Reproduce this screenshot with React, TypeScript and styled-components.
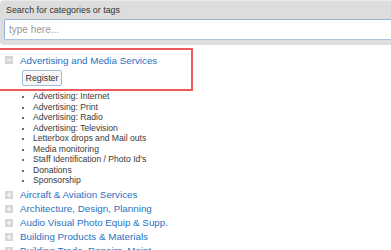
import React from 'react';
import styled, { createGlobalStyle } from 'styled-components';

const GlobalStyle = createGlobalStyle`
  html, body {
    margin: 0;
    padding: 0;
    background: #fff;
    overflow: hidden;
  }
  body {
    font-family: "Liberation Sans", Arial, sans-serif;
    color: #333;
  }
`;

const Page = styled.div({
  width: '430px',
  display: 'flex',
  flexDirection: 'column',
});

const SearchPanel = styled.div({
  background: '#dddddd',
  borderTop: '1px solid #ececec',
  borderRadius: '4px',
  padding: '2px 4px 5px 4px',
  display: 'flex',
  flexDirection: 'column',
  gap: '2px',
});

const SearchLabel = styled.label({
  fontSize: '8.9px',
  lineHeight: '14px',
  paddingLeft: '2px',
  color: '#333',
});

const SearchInput = styled.input`
  box-sizing: border-box;
  height: 21px;
  border: 1px solid #8fb3d9;
  border-bottom-color: #a8c4e0;
  border-radius: 2px;
  padding: 0 4px;
  font-family: "Liberation Sans", Arial, sans-serif;
  font-size: 10px;
  color: #333;
  outline: none;
  &::placeholder {
    color: #999;
  }
`;

const Tree = styled.div({
  display: 'flex',
  flexDirection: 'column',
  marginTop: '3px',
});

const Highlight = styled.div({
  width: '195px',
  marginLeft: '-2px',
  border: '2px solid #ec5a5c',
  boxSizing: 'border-box',
  padding: '3px 0 3px 0',
  display: 'flex',
  flexDirection: 'column',
  alignItems: 'flex-start',
  gap: '3px',
});

const CategoryRow = styled.div`
  display: flex;
  align-items: center;
  gap: 7px;
  height: 14px;
  padding-left: 5px;
`;

const CategoryLink = styled.a({
  fontSize: '9.8px',
  color: '#1f72c4',
  textDecoration: 'none',
  whiteSpace: 'nowrap',
});

const RegisterButton = styled.button({
  marginLeft: '22px',
  height: '16px',
  width: '40px',
  padding: 0,
  boxSizing: 'border-box',
  border: '1px solid #9dbfdf',
  borderRadius: '2px',
  background: '#f7f7f7',
  fontFamily: '"Liberation Sans", Arial, sans-serif',
  fontSize: '8.9px',
  color: '#333',
});

const SubList = styled.ul({
  margin: '0 0 2px 0',
  paddingLeft: '33px',
  fontSize: '8.6px',
  lineHeight: '10.5px',
  color: '#3a3a3a',
  listStyle: 'disc',
  '& li::marker': {
    fontSize: '7px',
  },
});

const ToggleIcon = ({ open }: { open: boolean }) => (
  <svg width="8" height="8" viewBox="0 0 8 8">
    <rect width="8" height="8" fill="#d6d6d6" />
    <rect x="1.5" y="3.5" width="5" height="1" fill="#fff" />
    {!open && <rect x="3.5" y="1.5" width="1" height="5" fill="#fff" />}
  </svg>
);

const subItems = [
  'Advertising: Internet',
  'Advertising: Print',
  'Advertising: Radio',
  'Advertising: Television',
  'Letterbox drops and Mail outs',
  'Media monitoring',
  "Staff Identification / Photo Id's",
  'Donations',
  'Sponsorship',
];

const categories = [
  'Aircraft & Aviation Services',
  'Architecture, Design, Planning',
  'Audio Visual Photo Equip & Supp.',
  'Building Products & Materials',
  'Building Trade, Repairs, Maint',
];

export default function App() {
  return (
    <Page>
      <GlobalStyle />
      <SearchPanel>
        <SearchLabel>Search for categories or tags</SearchLabel>
        <SearchInput placeholder="type here..." />
      </SearchPanel>
      <Tree>
        <Highlight>
          <CategoryRow>
            <ToggleIcon open />
            <CategoryLink href="#">Advertising and Media Services</CategoryLink>
          </CategoryRow>
          <RegisterButton>Register</RegisterButton>
        </Highlight>
        <SubList>
          {subItems.map((s) => (
            <li key={s}>{s}</li>
          ))}
        </SubList>
        {categories.map((c) => (
          <CategoryRow key={c}>
            <ToggleIcon open={false} />
            <CategoryLink href="#">{c}</CategoryLink>
          </CategoryRow>
        ))}
      </Tree>
    </Page>
  );
}
